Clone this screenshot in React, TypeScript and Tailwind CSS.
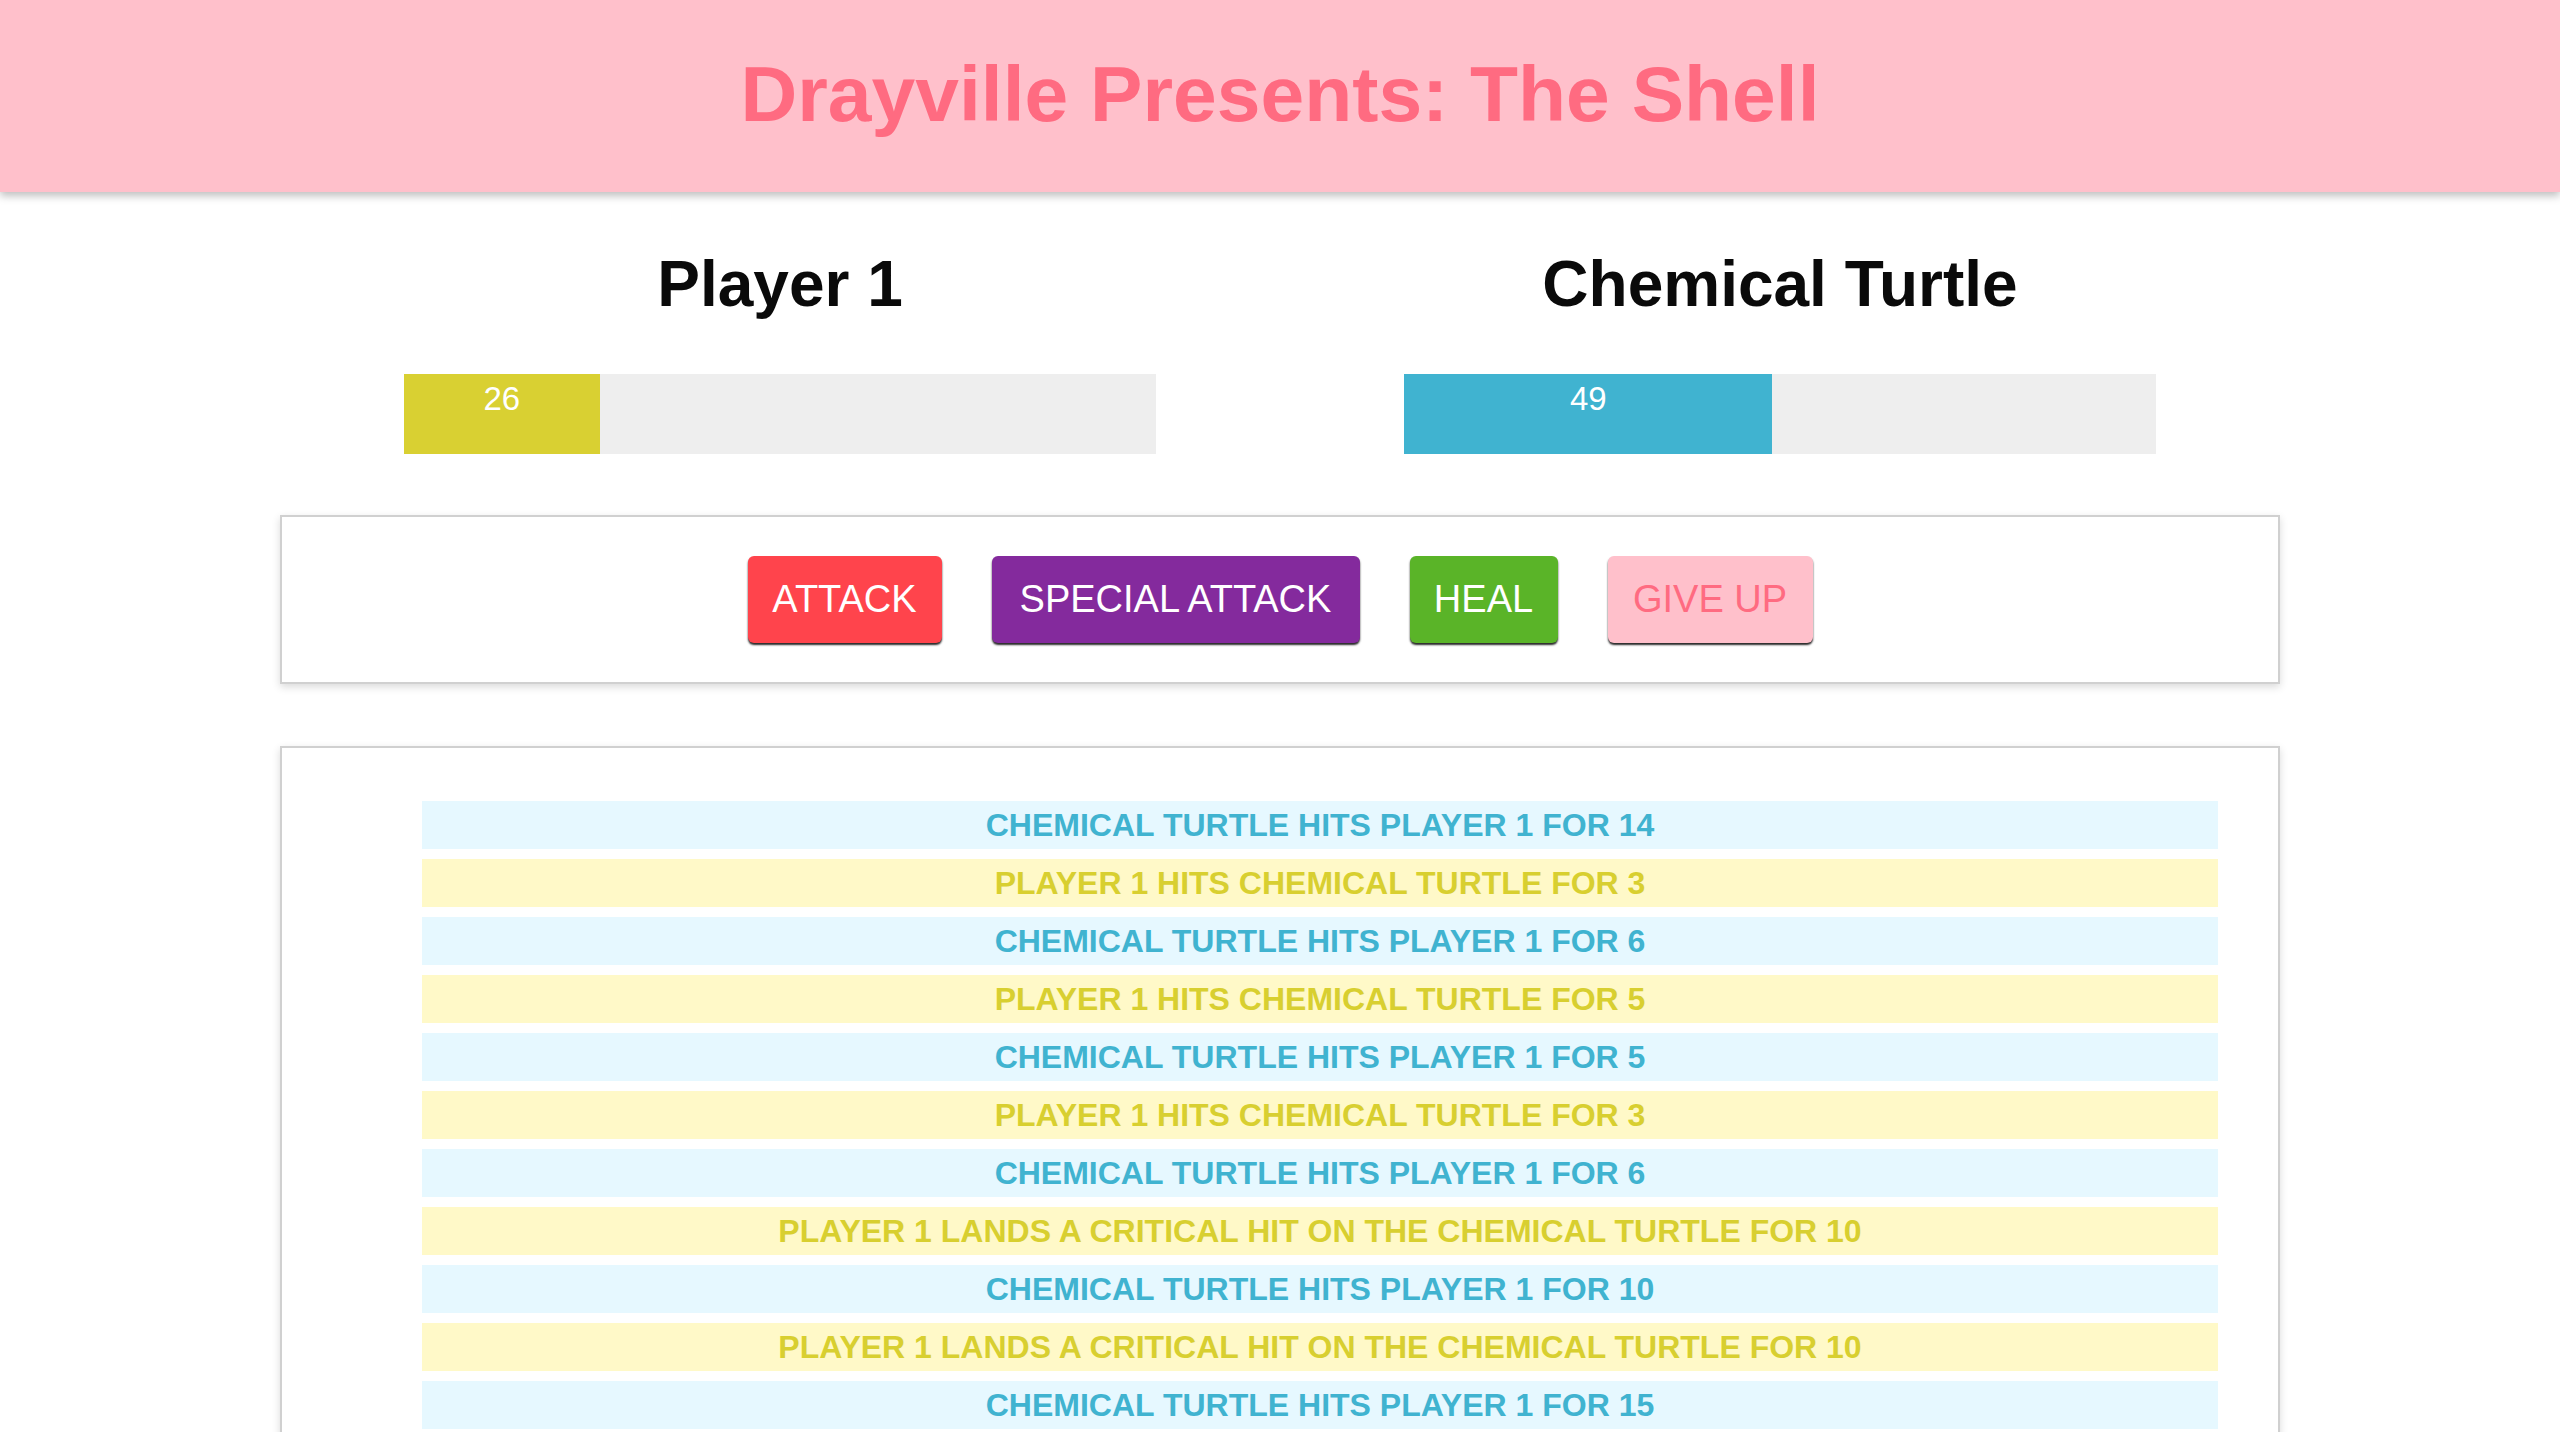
import React from "react";

const logs: { who: "m" | "p"; text: string }[] = [
  { who: "m", text: "Chemical Turtle hits Player 1 for 14" },
  { who: "p", text: "Player 1 hits Chemical Turtle for 3" },
  { who: "m", text: "Chemical Turtle hits Player 1 for 6" },
  { who: "p", text: "Player 1 hits Chemical Turtle for 5" },
  { who: "m", text: "Chemical Turtle hits Player 1 for 5" },
  { who: "p", text: "Player 1 hits Chemical Turtle for 3" },
  { who: "m", text: "Chemical Turtle hits Player 1 for 6" },
  { who: "p", text: "Player 1 lands a critical hit on the Chemical Turtle for 10" },
  { who: "m", text: "Chemical Turtle hits Player 1 for 10" },
  { who: "p", text: "Player 1 lands a critical hit on the Chemical Turtle for 10" },
  { who: "m", text: "Chemical Turtle hits Player 1 for 15" },
  { who: "p", text: "Player 1 hits Chemical Turtle for 4" },
];

function Bar({ value, color }: { value: number; color: string }) {
  return (
    <div className="mx-auto w-[752px] h-[80px] bg-[#eeeeee]">
      <div
        className={`h-full text-center text-white text-[33px] leading-[1.5] ${color}`}
        style={{ width: `${value}%` }}
      >
        {value}
      </div>
    </div>
  );
}

export default function App() {
  return (
    <div
      className="min-h-screen bg-white"
      style={{ fontFamily: '"Liberation Sans", Arial, Helvetica, sans-serif' }}
    >
      <header className="h-[192px] bg-[#ffc0cb] shadow-[0_4px_8px_rgba(0,0,0,0.25)] pt-[55px] text-center relative z-10">
        <h1 className="text-[78.6px] font-bold leading-none text-[#ff6b81]">
          Drayville Presents: The Shell
        </h1>
      </header>

      <main className="w-[2000px] mx-auto">
        <section className="grid grid-cols-2 pt-[60px]">
          <div>
            <h2 className="text-[64px] font-bold leading-none text-center text-[#0a0a0a]">Player 1</h2>
            <div className="mt-[58px]">
              <Bar value={26} color="bg-[#d9d032]" />
            </div>
          </div>
          <div>
            <h2 className="text-[64px] font-bold leading-none text-center text-[#0a0a0a]">Chemical Turtle</h2>
            <div className="mt-[58px]">
              <Bar value={49} color="bg-[#40b3d0]" />
            </div>
          </div>
        </section>

        <section className="mt-[61px] border-2 border-[#d0d0d0] shadow-[0_3px_8px_rgba(0,0,0,0.15)] py-[39px] flex justify-center gap-[50px]">
          <button className="w-[194px] h-[87px] rounded-[6px] bg-[#ff444c] text-white text-[38px] shadow-[0_2px_2px_rgba(0,0,0,0.85)]">
            ATTACK
          </button>
          <button className="w-[368px] h-[87px] rounded-[6px] bg-[#842a9d] text-white text-[38px] shadow-[0_2px_2px_rgba(0,0,0,0.85)]">
            SPECIAL ATTACK
          </button>
          <button className="w-[148px] h-[87px] rounded-[6px] bg-[#5ab428] text-white text-[38px] shadow-[0_2px_2px_rgba(0,0,0,0.85)]">
            HEAL
          </button>
          <button className="w-[205px] h-[87px] rounded-[6px] bg-[#ffc0cb] text-[#ff6b81] text-[38px] shadow-[0_2px_2px_rgba(0,0,0,0.85)]">
            GIVE UP
          </button>
        </section>

        <section className="mt-[62px] border-2 border-[#d0d0d0] shadow-[0_3px_8px_rgba(0,0,0,0.15)] pt-[53px] pb-[40px] pl-[140px] pr-[60px]">
          <ul className="flex flex-col gap-[10px]">
            {logs.map((l, i) => (
              <li
                key={i}
                className={
                  l.who === "m"
                    ? "h-[48px] flex items-center justify-center bg-[#e6f8ff] text-[#40b3d0] text-[32px] font-bold uppercase"
                    : "h-[48px] flex items-center justify-center bg-[#fff9c8] text-[#d8cf30] text-[32px] font-bold uppercase"
                }
              >
                {l.text}
              </li>
            ))}
          </ul>
        </section>
      </main>
    </div>
  );
}
